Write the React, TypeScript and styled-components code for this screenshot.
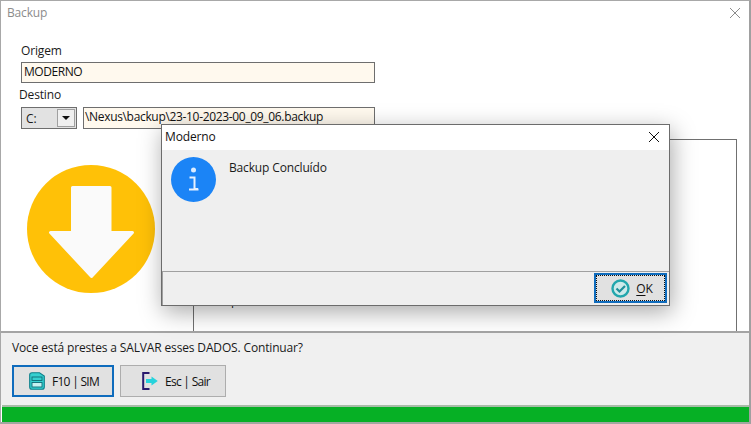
import React from "react";
import styled, { createGlobalStyle } from "styled-components";

const Global = createGlobalStyle`
  html, body { margin: 0; padding: 0; background: #fff; }
  #root { width: 751px; height: 424px; overflow: hidden; }
  * { box-sizing: border-box; }
`;

const Win = styled.div`
  position: relative;
  width: 751px;
  height: 424px;
  display: flex;
  flex-direction: column;
  background: #fff;
  border-top: 1px solid #a8a8a8;
  border-left: 1px solid #a8a8a8;
  border-right: 2px solid #a0a0a0;
  border-bottom: 2px solid #a0a8a0;
  font-family: "Open Sans", "Noto Sans", sans-serif;
  font-size: 12px;
  letter-spacing: -0.15px;
  color: #1a1a1a;
`;

const TitleBar = styled.div`
  height: 26px;
  flex: none;
  display: flex;
  align-items: center;
  justify-content: space-between;
  padding: 0 9px 3px 6px;
  color: #8c8c8c;
`;

const Form = styled.div`
  flex: none;
  display: flex;
  flex-direction: column;
  padding: 16px 0 0 20px;
`;

const Label = styled.div<{ $shift?: number; $top?: number }>`
  height: ${(p) => (p.$top ? 20 : 19)}px;
  line-height: 16px;
  margin-left: ${(p) => p.$shift ?? 0}px;
  margin-top: ${(p) => p.$top ?? 0}px;
`;

const Field = styled.div<{ $w?: number }>`
  height: ${(p) => (p.$w ? 22 : 21)}px;
  width: ${(p) => p.$w ?? 354}px;
  background: #fff9ee;
  border: 1px solid #6e6e6e;
  padding: 0 ${(p) => (p.$w ? 1 : 2)}px;
  line-height: 18px;
  letter-spacing: ${(p) => (p.$w ? -0.33 : -0.45)}px;
  white-space: nowrap;
  overflow: hidden;
  color: #111;
`;

const Row = styled.div`
  display: flex;
  gap: 6px;
`;

const Combo = styled.div`
  width: 56px;
  height: 22px;
  display: flex;
  align-items: center;
  justify-content: space-between;
  padding: 0 1px 0 4px;
  background: #e2e2e2;
  border: 1px solid #6e6e6e;
`;

const ComboBtn = styled.div`
  width: 18px;
  height: 18px;
  background: #f0f0f0;
  border: 1px solid #a0a0a0;
  display: flex;
  align-items: center;
  justify-content: center;
  &::after {
    content: "";
    border-left: 4px solid transparent;
    border-right: 4px solid transparent;
    border-top: 4px solid #111;
  }
`;

const Main = styled.div`
  flex: 1;
  min-height: 0;
  display: flex;
  padding: 10px 12px 0 0;
`;

const Left = styled.div`
  width: 192px;
  flex: none;
  padding: 25px 0 0 25px;
`;

const Panel = styled.div`
  flex: 1;
  border: 1px solid #707070;
  border-bottom: none;
  padding: 153px 0 0 37px;
  line-height: 16px;
`;

const Footer = styled.div`
  flex: none;
  height: 74px;
  background: #f0f0f0;
  border-top: 2px solid #a4a4a4;
  padding: 7px 0 0 11px;
`;

const Prompt = styled.div`
  height: 25px;
  line-height: 16px;
`;

const Buttons = styled.div`
  display: flex;
  gap: 6px;
`;

const Btn = styled.div<{ $w: number; $active?: boolean; $pad: number }>`
  width: ${(p) => p.$w}px;
  height: 32px;
  display: flex;
  align-items: center;
  justify-content: center;
  gap: 7px;
  padding-left: ${(p) => p.$pad}px;
  background: #e1e1e1;
  border: ${(p) => (p.$active ? "2px solid #0f6cbd" : "1px solid #adadad")};
  color: #111;
  letter-spacing: -0.7px;
`;

const Progress = styled.div`
  flex: none;
  height: 17px;
  background: #06b025;
  border-top: 2px solid #a8bca8;
  margin-left: 1px;
`;

const Dialog = styled.div`
  position: absolute;
  left: 160px;
  top: 123px;
  width: 509px;
  height: 182px;
  display: flex;
  flex-direction: column;
  background: #efefef;
  border: 1px solid #6c6c6c;
  box-shadow: 2px 6px 22px rgba(0, 0, 0, 0.34);
`;

const DialogTitle = styled.div`
  height: 25px;
  flex: none;
  background: #fff;
  display: flex;
  align-items: center;
  justify-content: space-between;
  padding: 0 10px 2px 3px;
  color: #111;
`;

const DialogBody = styled.div`
  flex: 1;
  display: flex;
  gap: 13px;
  padding: 7px 0 0 9px;
`;

const Msg = styled.div`
  line-height: 16px;
  padding-top: 3px;
`;

const DialogFoot = styled.div`
  height: 34px;
  flex: none;
  border-top: 1px solid #a0a0a0;
  border-left: 1px solid #a0a0a0;
  display: flex;
  justify-content: flex-end;
  padding: 1px 2px 0 0;
`;

const OkBtn = styled.div`
  width: 73px;
  height: 30px;
  border: 2px solid #0f6cbd;
  background: #e1e1e1;
  outline: 1px dotted #111;
  outline-offset: -3px;
  display: flex;
  align-items: center;
  justify-content: center;
  gap: 6px;
  padding-left: 3px;
  color: #111;
  u { text-underline-offset: 2px; }
`;

const Close = ({ c, s }: { c: string; s: number }) => (
  <svg width={s} height={s} viewBox="0 0 10 10" fill="none" stroke={c} strokeWidth="1">
    <path d="M0 0L10 10M10 0L0 10" />
  </svg>
);

const BigArrow = () => (
  <svg width="130" height="130" viewBox="0 0 130 130">
    <circle cx="65" cy="65" r="64" fill="#ffc107" />
    <path
      d="M46.5 23.5H84V68.500H106.500L65.500 112.500L24.500 68.500H46.500Z"
      fill="#fafafa"
      stroke="#fafafa"
      strokeWidth="3"
      strokeLinejoin="round"
    />
  </svg>
);

const InfoIcon = () => (
  <svg width="45" height="45" viewBox="0 0 45 45">
    <circle cx="22.500" cy="22.500" r="22.500" fill="#1b84f6" />
    <circle cx="22.500" cy="13" r="2.500" fill="#dcecff" />
    <path d="M18.500 20.500H23.500V32H27M18 32.500H27.500" fill="none" stroke="#e4f0ff" strokeWidth="2" />
  </svg>
);

const SaveIcon = () => (
  <svg width="16" height="18" viewBox="0 0 16 18" style={{ flex: "none" }}>
    <path d="M.7 3Q.7 .7 3 .7H10.500L15.300 4V15Q15.300 17.300 13 17.300H3Q.7 17.300 .7 15Z" fill="#35d0d0" stroke="#0e7f8a" strokeWidth="1.100" />
    <rect x="3" y="5" width="10" height="3.500" fill="#35d0d0" stroke="#0e6a76" strokeWidth=".9" />
    <rect x="3" y="10.500" width="10" height="4.500" fill="#c4f2f2" stroke="#0e6a76" strokeWidth=".9" />
  </svg>
);

const ExitIcon = () => (
  <svg width="16" height="18" viewBox="0 0 16 18" style={{ flex: "none" }}>
    <path d="M7.500 1H1.200V17H7.500" fill="none" stroke="#2a1a6e" strokeWidth="2" />
    <path d="M4 7H9.500V4.500L15.800 9L9.500 13.500V11H4Z" fill="#27d3dc" />
  </svg>
);

const OkIcon = () => (
  <svg width="19" height="19" viewBox="0 0 19 19">
    <circle cx="9.500" cy="9.500" r="8" fill="#cdeaea" stroke="#22a7ad" strokeWidth="2.400" />
    <path d="M5.500 9.500L8.500 12.500L14 7" fill="none" stroke="#1f8f9a" strokeWidth="2.200" />
  </svg>
);

export default function App() {
  return (
    <>
      <Global />
      <Win>
        <TitleBar>
          <span>Backup</span>
          <Close c="#8c8c8c" s={10} />
        </TitleBar>
        <Form>
          <Label>Origem</Label>
          <Field>MODERNO</Field>
          <Label $shift={-2} $top={4}>Destino</Label>
          <Row>
            <Combo>
              <span>C:</span>
              <ComboBtn />
            </Combo>
            <Field $w={292}>\Nexus\backup\23-10-2023-00_09_06.backup</Field>
          </Row>
        </Form>
        <Main>
          <Left>
            <BigArrow />
          </Left>
          <Panel>p</Panel>
        </Main>
        <Footer>
          <Prompt>Voce está prestes a SALVAR esses DADOS. Continuar?</Prompt>
          <Buttons>
            <Btn $w={102} $active $pad={2}>
              <SaveIcon />
              <span>F10 | SIM</span>
            </Btn>
            <Btn $w={106} $pad={6}>
              <ExitIcon />
              <span>Esc | Sair</span>
            </Btn>
          </Buttons>
        </Footer>
        <Progress />
        <Dialog>
          <DialogTitle>
            <span>Moderno</span>
            <Close c="#111" s={10} />
          </DialogTitle>
          <DialogBody>
            <InfoIcon />
            <Msg>Backup Concluído</Msg>
          </DialogBody>
          <DialogFoot>
            <OkBtn>
              <OkIcon />
              <span><u>O</u>K</span>
            </OkBtn>
          </DialogFoot>
        </Dialog>
      </Win>
    </>
  );
}
